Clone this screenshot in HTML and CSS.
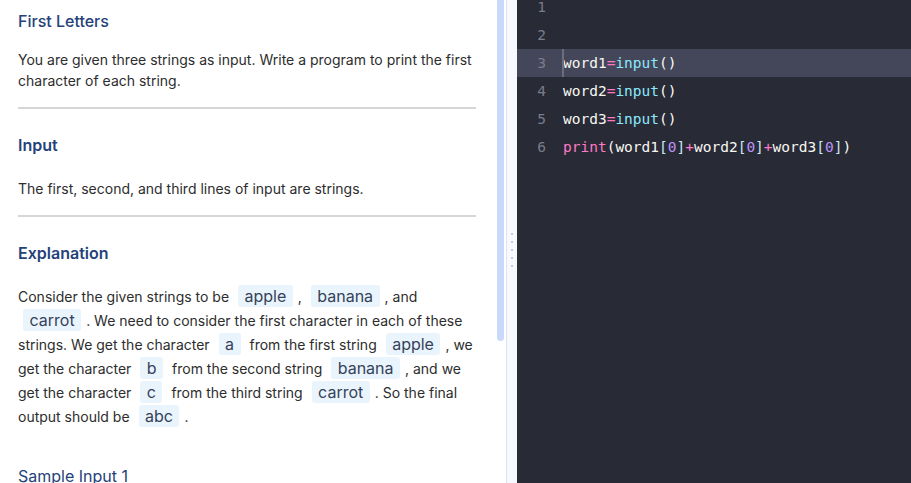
FILE: index.html
```html
<!DOCTYPE html>
<html lang="en">
<head>
<meta charset="utf-8">
<title>First Letters</title>
<link rel="stylesheet" href="styles.css">
</head>
<body>
<div class="app">
  <div class="problem">
    <div class="problem-inner">
      <h1 class="title">First Letters</h1>
      <p class="text text-first">You are given three strings as input. Write a program to print the first character of each string.</p>
      <hr class="rule">
      <h2 class="heading">Input</h2>
      <p class="text text-input">The first, second, and third lines of input are strings.</p>
      <hr class="rule">
      <h2 class="heading">Explanation</h2>
      <p class="text text-expl">Consider the given strings to be <code class="chip">apple</code>, <code class="chip">banana</code>, and <code class="chip">carrot</code>. We need to consider the first character in each of these strings. We get the character <code class="chip">a</code> from the first string <code class="chip">apple</code>, we get the character <code class="chip">b</code> from the second string <code class="chip">banana</code>, and we get the character <code class="chip">c</code> from the third string <code class="chip">carrot</code>. So the final output should be <code class="chip">abc</code>.</p>
      <h3 class="sample">Sample Input 1</h3>
      <pre class="sample-block">apple
banana
carrot</pre>
    </div>
    <div class="scrollbar"><div class="thumb"></div></div>
  </div>
  <div class="splitter">
    <div class="dots"><span class="dot"></span><span class="dot"></span><span class="dot"></span><span class="dot"></span><span class="dot"></span></div>
  </div>
  <div class="editor">
    <div class="code">
      <div class="line"><span class="ln">1</span><span class="src"></span></div>
      <div class="line"><span class="ln">2</span><span class="src"></span></div>
      <div class="line line-active"><span class="ln">3</span><span class="src"><span class="cursor"></span>word1<span class="op">=</span><span class="fn">input</span>()</span></div>
      <div class="line"><span class="ln">4</span><span class="src">word2<span class="op">=</span><span class="fn">input</span>()</span></div>
      <div class="line"><span class="ln">5</span><span class="src">word3<span class="op">=</span><span class="fn">input</span>()</span></div>
      <div class="line"><span class="ln">6</span><span class="src"><span class="kw">print</span>(word1<span class="br">[</span><span class="num">0</span><span class="br">]</span><span class="op">+</span>word2<span class="br">[</span><span class="num">0</span><span class="br">]</span><span class="op">+</span>word3<span class="br">[</span><span class="num">0</span><span class="br">]</span>)</span></div>
    </div>
  </div>
</div>
</body>
</html>
```
FILE: styles.css
```css
html, body {
  margin: 0;
  padding: 0;
  height: 483px;
  overflow: hidden;
  background: #ffffff;
}

.app {
  display: flex;
  height: 483px;
  font-family: Inter, "Noto Sans", sans-serif;
}

/* ---------- problem panel ---------- */
.problem {
  width: 507px;
  flex: none;
  box-sizing: border-box;
  height: 483px;
  display: flex;
  overflow: hidden;
  border-right: 1px solid #d9e4fb;
  background: #ffffff;
}

.problem-inner {
  flex: 1;
  min-width: 0;
  overflow: hidden;
  padding: 9px 21px 20px 18px;
}

.scrollbar {
  width: 9px;
  flex: none;
  background: #ffffff;
}

.thumb {
  width: 7px;
  height: 341px;
  background: #c8d9fc;
  border-radius: 0 0 4px 4px;
}

.title {
  margin: 0;
  font-size: 16px;
  line-height: 24px;
  font-weight: 500;
  color: #24427a;
}

.heading {
  margin: 0;
  font-size: 16px;
  line-height: 24px;
  font-weight: 600;
  color: #24427a;
}

.text {
  margin: 0;
  font-size: 14px;
  line-height: 21px;
  color: #2d2d2d;
}

.text-first {
  margin-top: 16px;
}

.text-input {
  margin-top: 21px;
}

.text-expl {
  margin-top: 20px;
  line-height: 24px;
}

.rule {
  margin: 16px 0 24px 0;
  border: 0;
  border-top: 2px solid #d6d6d6;
  height: 0;
}

.chip {
  display: inline-block;
  font-family: Inter, "Noto Sans", sans-serif;
  font-size: 16px;
  line-height: 22px;
  padding: 0 6.5px;
  margin: 0 5px;
  border-radius: 3px;
  background: #eaf4fd;
  color: #34425a;
}

.sample {
  margin: 35px 0 0 0;
  font-size: 16px;
  line-height: 24px;
  font-weight: 400;
  color: #24427a;
}

.sample-block {
  margin: 12px 0 0 0;
  padding: 12px;
  font-family: "DejaVu Sans Mono", monospace;
  font-size: 13px;
  background: #f5f7fa;
  color: #333;
}

/* ---------- splitter ---------- */
.splitter {
  width: 10px;
  flex: none;
  background: #f8f9fe;
  display: flex;
  align-items: center;
  justify-content: center;
  padding-top: 16px;
  box-sizing: border-box;
}

.dots {
  display: flex;
  flex-direction: column;
  gap: 6px;
}

.dot {
  width: 2px;
  height: 2px;
  border-radius: 1px;
  background: #b9bbc2;
}

/* ---------- editor ---------- */
.editor {
  flex: 1;
  background: #282a36;
  overflow: hidden;
  font-family: "DejaVu Sans Mono", "Liberation Mono", monospace;
  font-size: 14.5px;
  color: #f8f8f2;
}

.code {
  margin-top: -7px;
}

.line {
  display: flex;
  height: 28px;
  line-height: 28px;
  white-space: pre;
}

.line-active {
  background: #44475a;
}

.ln {
  width: 29px;
  flex: none;
  text-align: right;
  color: #7a7c8c;
}

.src {
  position: relative;
  margin-left: 17px;
}

.cursor {
  position: absolute;
  left: -1px;
  top: 0;
  width: 2px;
  height: 28px;
  background: #6c6e7e;
}

.op { color: #ff79c6; }
.kw { color: #ff79c6; }
.fn { color: #8be9fd; }
.num { color: #bd93f9; }
.br { color: #c9e8f5; }
```
